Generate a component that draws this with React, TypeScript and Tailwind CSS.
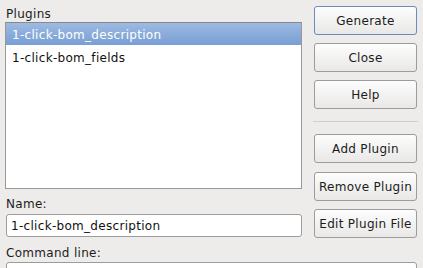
import React from "react";

const Btn: React.FC<{ label: string; primary?: boolean; className?: string }> = ({
    label,
    primary,
    className = "",
}) => (
    <div
        className={`h-[29px] flex items-center justify-center rounded-[3px] border bg-gradient-to-b from-[#fdfdfd] to-[#e9e8e7] text-[#1c1c1c] leading-[14px] ${
            primary ? "border-[#6a8cbd]" : "border-[#9d9c9b]"
        } ${className}`}
    >
        {label}
    </div>
);

const App: React.FC = () => {
    return (
        <div className="w-[423px] h-[268px] overflow-hidden bg-[#edeceb] font-['DejaVu_Sans',sans-serif] text-[12px] tracking-[0.3px] text-[#1c1c1c]">
            <div className="pt-[6px] pl-[5px] pr-[6px]">
                <div className="flex gap-[12px]">
                    {/* left column */}
                    <div className="w-[297px] flex flex-col">
                        <div className="h-[16px] pt-[1px] pl-[1px] leading-[14px]">Plugins</div>
                        <div className="h-[167px] border border-[#9a9998] border-t-[#8a8988] bg-white">
                            <div className="h-[22px] flex items-center pl-[6px] pt-[1px] bg-gradient-to-b from-[#9dbae2] to-[#789ed3] text-white leading-[14px]">
                                1-click-bom_description
                            </div>
                            <div className="h-[23px] flex items-center pl-[6px] pt-[2px] text-[#111] leading-[14px]">
                                1-click-bom_fields
                            </div>
                        </div>
                        <div className="mt-[8px] pl-[1px] leading-[14px]">Name:</div>
                        <div className="mt-[3px] ml-[1px] h-[23px] flex items-center pl-[4px] pt-[1px] rounded-[3px] border border-[#9d9c9b] bg-white leading-[14px] text-[#111]">
                            1-click-bom_description
                        </div>
                    </div>

                    {/* right column */}
                    <div className="w-[103px] flex flex-col">
                        <Btn label="Generate" primary />
                        <Btn label="Close" className="mt-[8px]" />
                        <Btn label="Help" className="mt-[8px]" />
                        <div className="mt-[12px] mb-[12px] -mx-[1px] h-[1px] bg-[#cfcecd]" />
                        <Btn label="Add Plugin" />
                        <Btn label="Remove Plugin" className="mt-[9px]" />
                        <Btn label="Edit Plugin File" className="mt-[8px]" />
                    </div>
                </div>

                <div className="mt-[8px] pl-[1px] leading-[14px]">Command line:</div>
                <div className="mt-[2px] ml-[1px] h-[24px] rounded-[3px] border border-[#9d9c9b] bg-white" />
            </div>
        </div>
    );
};

export default App;
